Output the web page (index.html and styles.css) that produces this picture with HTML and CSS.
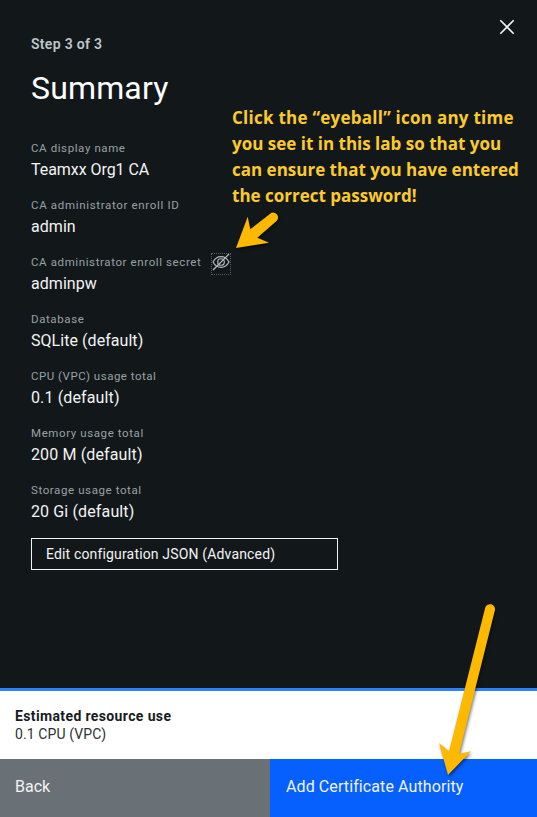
FILE: index.html
```html
<!DOCTYPE html>
<html lang="en">
<head>
<meta charset="utf-8">
<title>Add Certificate Authority</title>
<link rel="stylesheet" href="styles.css">
</head>
<body>
<div class="panel">
  <main class="content">
    <button class="close" aria-label="Close"><svg width="16" height="16" viewBox="0 0 16 16"><path d="M1.3 1.3 14.7 14.7M14.7 1.3 1.3 14.7"/></svg></button>
    <p class="step">Step 3 of 3</p>
    <h1 class="title"><span>Summary</span></h1>
    <dl class="summary">
      <div class="item"><dt>CA display name</dt><dd class="team">Teamxx Org1 CA</dd></div>
      <div class="item"><dt class="enroll">CA administrator enroll ID</dt><dd>admin</dd></div>
      <div class="item"><dt class="with-icon">CA administrator enroll secret
        <button class="eye" aria-label="Hide secret"><svg width="18" height="18" viewBox="0 0 18 18"><path d="M1 9C3 5.3 5.7 3.6 9 3.6S15 5.3 17 9c-2 3.7-4.700 5.400-8 5.400S3 12.700 1 9Z"/><circle cx="9" cy="9" r="3.300"/><path d="M1 17 17 1"/></svg></button></dt><dd>adminpw</dd></div>
      <div class="item"><dt>Database</dt><dd>SQLite (default)</dd></div>
      <div class="item"><dt class="cpu">CPU (VPC) usage total</dt><dd class="amount">0.1 (default)</dd></div>
      <div class="item"><dt>Memory usage total</dt><dd class="amount">200 M (default)</dd></div>
      <div class="item"><dt>Storage usage total</dt><dd class="amount">20 Gi (default)</dd></div>
    </dl>
    <button class="edit">Edit configuration JSON (Advanced)</button>
  </main>
  <section class="estimate">
    <strong>Estimated resource use</strong>
    <span>0.1 CPU (VPC)</span>
  </section>
  <footer class="actions">
    <button class="back">Back</button>
    <button class="add">Add Certificate Authority</button>
  </footer>
  <p class="note"><span class="lead">Click the “eyeball” icon any time</span><br>you see it in this lab so that you<br>can ensure that you have entered<br>the correct password!</p>
  <svg class="arrows" width="537" height="817" viewBox="0 0 537 817">
    <path d="M236 248 247.700 216.800 250.300 229.300 270.200 213.700A4.800 4.800 0 0 1 276.300 221.200L257.300 237.700 269 242.700Z"/>
    <path d="M448 775 439 743 449 751.300 485.200 607.800A5 5 0 0 1 494.900 610.200L459 753.700 471 751.300Z"/>
  </svg>
</div>
</body>
</html>
```
FILE: styles.css
```css
* { box-sizing: border-box; }
body { margin: 0; font-family: Roboto, "Liberation Sans", sans-serif; }
p, h1, dl, dd { margin: 0; }
button { font: inherit; color: inherit; border: 0; padding: 0; background: none; text-align: left; }
.panel { position: relative; display: flex; flex-direction: column; width: 537px; height: 817px; overflow: hidden; background: #12181a; color: #f3f3f3; white-space: nowrap; }
.content { flex: 1; padding: 35px 31px 0; }
.close { position: absolute; left: 499px; top: 19px; width: 16px; height: 16px; }
.close svg { display: block; fill: none; stroke: #f3f3f3; stroke-width: 1.6; }
.step { font-size: 14px; line-height: 18px; font-weight: 600; color: #bec6ca; letter-spacing: .3px; }
.title { margin-top: 15px; font-size: 32px; line-height: 40px; font-weight: 400; color: #fff; letter-spacing: .15px; }
.summary { margin-top: 32px; }
.item { height: 57px; }
.item:last-child { height: 56px; }
dt { height: 18px; font-size: 11.5px; line-height: 16px; color: #98a0a4; letter-spacing: .6px; }
.enroll { letter-spacing: .67px; }
.cpu { letter-spacing: .5px; }
dd { font-size: 16px; line-height: 24px; letter-spacing: .05px; }
.team { letter-spacing: -.05px; }
.amount { letter-spacing: .13px; }
.with-icon { display: flex; gap: 10px; letter-spacing: .61px; }
.eye { display: flex; align-items: flex-start; width: 20px; height: 22px; margin-top: -1px; border: 1px dotted #565d60; }
.eye svg { display: block; margin-top: -1px; fill: none; stroke: #b4bcc0; stroke-width: 1.15; }
.edit { display: block; width: 307px; height: 32px; border: 1px solid #f3f3f3; padding-left: 14px; font-size: 14px; letter-spacing: .16px; }
.estimate { height: 71px; border-top: 3px solid #2d81fc; background: #fff; color: #2c3134; padding: 16px 15px; font-size: 14px; line-height: 18px; letter-spacing: .1px; }
.estimate strong, .estimate span { display: block; }
.estimate strong { color: #171b1d; letter-spacing: .37px; }
.actions { display: flex; height: 58px; font-size: 16px; }
.actions button { height: 58px; padding-bottom: 4px; }
.back { width: 270px; padding-left: 15px; background: #697177; }
.add { flex: 1; padding-left: 16px; background: #0660fe; letter-spacing: .1px; }
.note { position: absolute; left: 232px; top: 105px; font: 700 17px/26px "Open Sans", sans-serif; color: #fdca2c; }
.lead { letter-spacing: .25px; }
.arrows { position: absolute; left: 0; top: 0; pointer-events: none; fill: #fdb900; filter: drop-shadow(1px 2px 1.5px rgba(0,0,0,.5)); }
```
